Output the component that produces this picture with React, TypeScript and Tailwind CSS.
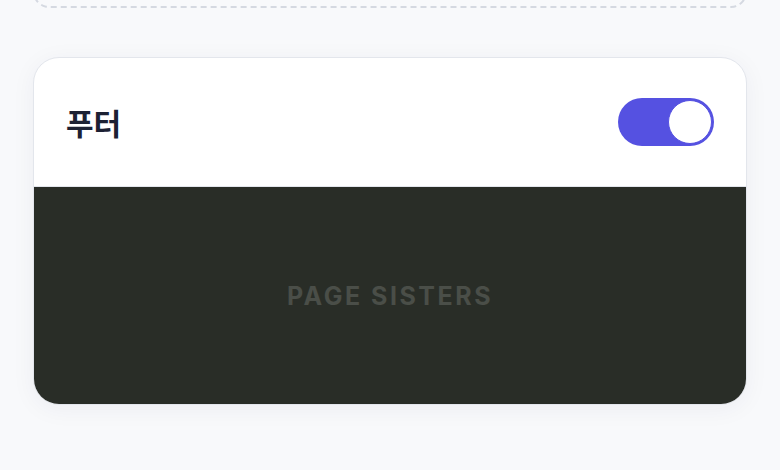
import { useState } from 'react';

export default function App() {
  const [footerOn, setFooterOn] = useState(true);

  return (
    <div className="min-h-[470px] overflow-hidden bg-[#f8f9fb] px-[33px] font-['Noto_Sans_CJK_KR','Noto_Sans',sans-serif]">
      {/* bottom edge of the previous section */}
      <div className="-mt-[100px] h-[108px] rounded-2xl border-2 border-dashed border-[#d5d9e1]" />

      <section className="mt-[49px] overflow-hidden rounded-[26px] border border-[#e3e6ec] bg-white shadow-[0_4px_24px_rgba(30,40,70,0.05)]">
        <div className="flex h-[129px] items-center justify-between border-b border-[#e3e6ec] px-8">
          <h2 className="text-[30px] font-bold leading-none text-[#1c2133]">푸터</h2>
          <button
            type="button"
            onClick={() => setFooterOn(!footerOn)}
            className={`flex h-12 w-24 items-center rounded-full p-[2px] ${footerOn ? 'justify-end bg-[#5551e1]' : 'justify-start bg-gray-300'}`}
            aria-pressed={footerOn}
            title="푸터 표시"
          >
            <span className={`h-11 w-11 rounded-full border bg-white ${footerOn ? 'border-[#5551e1]' : 'border-gray-300'}`} />
          </button>
        </div>
        <div className="flex h-[217px] items-center justify-center bg-[#292d27] pt-[3px]">
          <span className="font-['Inter',sans-serif] text-[25px] font-bold tracking-[0.1em] text-[#4a4e48]">PAGE SISTERS</span>
        </div>
      </section>
    </div>
  );
}
